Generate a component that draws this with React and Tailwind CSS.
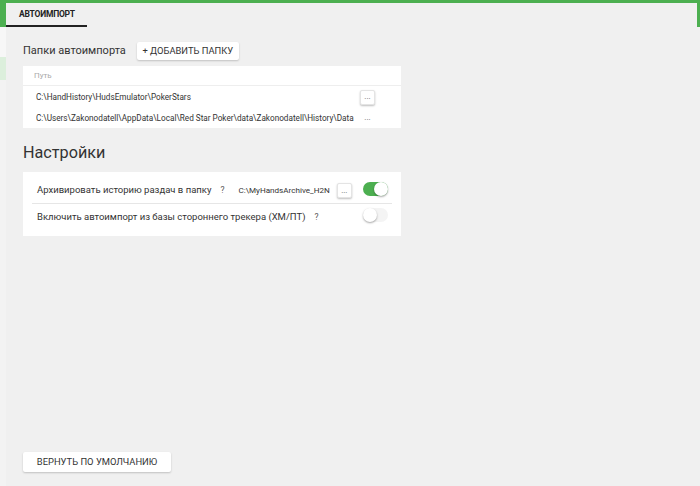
import { useState } from "react";

const Dots = ({ flat }) => (
  <button
    className={`w-[15px] h-[15px] rounded-[2px] bg-white text-[8px] leading-[10px] text-[#666] flex items-center justify-center ${
      flat ? "" : "shadow-[0_1px_2px_rgba(0,0,0,0.25)] border border-[#e4e4e4]"
    }`}
  >
    ...
  </button>
);

const Toggle = ({ on, onClick }) => (
  <button
    onClick={onClick}
    className={`relative w-[25px] h-[14px] rounded-full ${on ? "bg-[#4caf50]" : "bg-[#f4f4f4]"}`}
  >
    <span
      className={`absolute top-[0px] w-[14px] h-[14px] rounded-full bg-white shadow-[0_1px_2px_rgba(0,0,0,0.35)] ${
        on ? "left-[11px]" : "left-[0px]"
      }`}
    />
  </button>
);

const App = () => {
  const [archive, setArchive] = useState(true);
  const [thirdParty, setThirdParty] = useState(false);

  const folders = [
    { path: "C:\\HandHistory\\HudsEmulator\\PokerStars", raised: true },
    {
      path: "C:\\Users\\Zakonodatell\\AppData\\Local\\Red Star Poker\\data\\Zakonodatell\\History\\Data",
      raised: false,
    },
  ];

  return (
    <div
      className="w-[700px] h-[486px] flex flex-col bg-[#f0f0f0] text-[#333] overflow-hidden"
      style={{ fontFamily: "Roboto, 'Liberation Sans', sans-serif" }}
    >
      <div className="h-[3px] bg-[#4caf50] shrink-0" />
      <div className="flex flex-1 min-h-0">
        {/* left strip of the window behind */}
        <div className="w-[6px] flex flex-col shrink-0">
          <div className="h-[24px] bg-[#4caf50]" />
          <div className="h-[30px] bg-[#f7f7f7]" />
          <div className="h-[23px] bg-[#dcefdc]" />
          <div className="flex-1 bg-[#f3f3f3]" />
        </div>

        <div className="flex-1 flex flex-col min-w-0">
          {/* tabs */}
          <div className="h-[24px] flex shrink-0">
            <div className="w-[81px] border-b-2 border-[#222] flex items-center pl-[13px] text-[8.5px] font-bold text-[#222] tracking-tight">
              АВТОИМПОРТ
            </div>
          </div>

          <div className="flex-1 flex flex-col pl-[17px] pt-[15px] pb-[14px]">
            <div className="flex items-center gap-[11px] h-[18px] whitespace-nowrap">
              <span className="text-[11px] text-[#333]">Папки автоимпорта</span>
              <button className="h-[18px] w-[102px] bg-white text-[9.4px] text-[#333] shadow-[0_1px_2px_rgba(0,0,0,0.2)] rounded-[2px]">
                + ДОБАВИТЬ ПАПКУ
              </button>
            </div>

            <div className="mt-[6px] w-[378px] bg-white">
              <div className="h-[20px] flex items-center pl-[11px] text-[8px] text-[#aaa] border-b border-[#eee]">
                Путь
              </div>
              {folders.map((f, i) => (
                <div key={i} className="h-[21px] flex items-center pl-[13px] pr-[26px] pt-[1px]">
                  <span className="flex-1 text-[8.2px] text-[#333] whitespace-nowrap overflow-hidden">
                    {f.path}
                  </span>
                  <Dots flat={!f.raised} />
                </div>
              ))}
            </div>

            <div className="mt-[15px] text-[16.2px] leading-[20px] text-[#333]">Настройки</div>

            <div className="mt-[9px] w-[378px] bg-white px-[9px] py-[6px]">
              <div className="h-[26px] flex items-center border-b border-[#e6e6e6] pl-[5px] pr-[4px] whitespace-nowrap">
                <span className="text-[9.5px] text-[#333]">Архивировать историю раздач в папку</span>
                <span className="ml-[9px] text-[8.5px] text-[#555]">?</span>
                <span className="ml-[14px] text-[8.1px] text-[#333]">C:\MyHandsArchive_H2N</span>
                <span className="ml-[7px]">
                  <Dots />
                </span>
                <span className="ml-auto">
                  <Toggle on={archive} onClick={() => setArchive(!archive)} />
                </span>
              </div>
              <div className="h-[26px] flex items-center pl-[5px] pr-[4px] whitespace-nowrap">
                <span className="text-[9.5px] text-[#333]">
                  Включить автоимпорт из базы стороннего трекера (ХМ/ПТ)
                </span>
                <span className="ml-[9px] text-[8.5px] text-[#555]">?</span>
                <span className="ml-auto">
                  <Toggle on={thirdParty} onClick={() => setThirdParty(!thirdParty)} />
                </span>
              </div>
            </div>

            <div className="mt-auto">
              <button className="h-[20px] w-[148px] bg-white text-[9.4px] text-[#333] shadow-[0_1px_2px_rgba(0,0,0,0.2)] rounded-[2px]">
                ВЕРНУТЬ ПО УМОЛЧАНИЮ
              </button>
            </div>
          </div>
        </div>

        <div className="w-[3px] flex flex-col shrink-0">
          <div className="h-[24px] bg-[#4caf50]" />
          <div className="flex-1 bg-[#f0f0f0]" />
        </div>
      </div>
    </div>
  );
};

export default App;
